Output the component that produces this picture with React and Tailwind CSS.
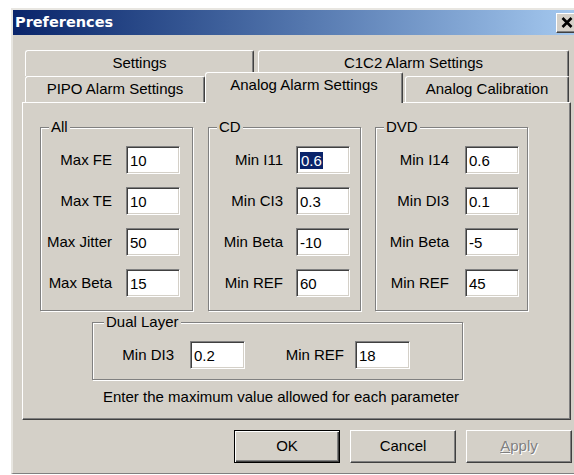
import React from "react";

const field =
  "h-[28px] bg-white border border-t-[#808080] border-l-[#808080] border-b-white border-r-white shadow-[inset_1px_1px_0_#404040,inset_-1px_-1px_0_#d4d0c8] flex items-center pl-[3px] leading-none";

const Field = ({ value, selected, width = "w-[54px]" }) => (
  <div className={`${field} ${width}`}>
    {selected ? (
      <span className="bg-[#0a246a] text-white px-[1px] py-[1px]">{value}</span>
    ) : (
      <span>{value}</span>
    )}
  </div>
);

const Group = ({ title, rows, className, rowClass }) => (
  <div
    className={`relative h-[184px] w-[153px] border border-[#808080] shadow-[inset_1px_1px_0_#fff,1px_1px_0_#fff] pt-[18px] flex flex-col gap-[13px] ${className}`}
  >
    <span className="absolute -top-[10px] left-[8px] bg-[#d4d0c8] px-[2px] leading-[18px]">
      {title}
    </span>
    {rows.map((r) => (
      <div key={r.label} className={`flex items-center justify-end ${rowClass}`}>
        <span>{r.label}</span>
        <Field value={r.value} selected={r.selected} />
      </div>
    ))}
  </div>
);

const Tab = ({ children, className }) => (
  <div
    className={`flex items-center justify-center bg-[#d4d0c8] border-l border-t border-white border-r border-r-[#404040] rounded-tl-[3px] rounded-tr-[2px] shadow-[inset_-1px_0_0_#808080] ${className}`}
  >
    {children}
  </div>
);

const Button = ({ children, isDefault, disabled }) => (
  <div
    className={`w-[106px] h-[33px] flex items-center justify-center bg-[#d4d0c8] border ${
      isDefault
        ? "border-black shadow-[inset_1px_1px_0_#fff,inset_-1px_-1px_0_#404040,inset_-2px_-2px_0_#808080]"
        : "border-t-white border-l-white border-b-[#404040] border-r-[#404040] shadow-[inset_-1px_-1px_0_#808080]"
    } ${disabled ? "text-[#808080] [text-shadow:1px_1px_0_#fff]" : ""}`}
  >
    {children}
  </div>
);

const allRows = [
  { label: "Max FE", value: "10" },
  { label: "Max TE", value: "10" },
  { label: "Max Jitter", value: "50" },
  { label: "Max Beta", value: "15" },
];

const cdRows = [
  { label: "Min I11", value: "0.6", selected: true },
  { label: "Min CI3", value: "0.3" },
  { label: "Min Beta", value: "-10" },
  { label: "Min REF", value: "60" },
];

const dvdRows = [
  { label: "Min I14", value: "0.6" },
  { label: "Min DI3", value: "0.1" },
  { label: "Min Beta", value: "-5" },
  { label: "Min REF", value: "45" },
];

export default function App() {
  return (
    <div className="w-[574px] h-[475px] overflow-hidden bg-white font-['Liberation_Sans',Arial,sans-serif] text-[15px] text-black">
      <div className="ml-[11px] mt-[8px] w-[571px] h-[466px] bg-[#d4d0c8] border-l-2 border-t-2 border-r-2 border-b border-l-[#e8e6e1] border-t-[#e8e6e1] border-r-[#404040] border-b-[#808080]">
        {/* title bar */}
        <div className="h-[25px] flex items-center justify-between bg-gradient-to-r from-[#0a246a] to-[#a6caf0]">
          <span className="pl-[2px] text-white font-bold font-['DejaVu_Sans',sans-serif] text-[14.5px]">
            Preferences
          </span>
          <div className="mr-[3px] w-[21px] h-[20px] bg-[#d4d0c8] border border-t-white border-l-white border-b-[#404040] border-r-[#404040] shadow-[inset_-1px_-1px_0_#808080] flex items-center justify-center">
            <svg width="12" height="11" viewBox="0 0 12 11">
              <path d="M1.5 1 L10.5 10 M10.5 1 L1.5 10" stroke="#000" strokeWidth="2.6" />
            </svg>
          </div>
        </div>

        <div className="pl-[9px] pt-[15px]">
          {/* tabs */}
          <div className="ml-[3px]">
            <div className="flex gap-[4px] h-[26px]">
              <Tab className="w-[229px] h-[26px]">Settings</Tab>
              <Tab className="w-[311px] h-[26px]">C1C2 Alarm Settings</Tab>
            </div>
            <div className="flex items-start h-[26px]">
              <Tab className="w-[180px] h-[26px]">PIPO Alarm Settings</Tab>
              <Tab className="relative z-10 -mt-[4px] w-[198px] h-[31px] pb-[6px]">
                Analog Alarm Settings
              </Tab>
              <Tab className="ml-[2px] w-[164px] h-[26px]">Analog Calibration</Tab>
            </div>
          </div>

          {/* page */}
          <div className="w-[549px] h-[318px] border border-t-white border-l-white border-b-[#404040] border-r-[#404040] shadow-[inset_-1px_-1px_0_#808080]">
            <div className="flex pl-[17px] pt-[24px]">
              <Group title="All" rows={allRows} rowClass="pr-[12px] gap-[14px]" />
              <Group title="CD" rows={cdRows} className="ml-[15px]" rowClass="pr-[10px] gap-[13px]" />
              <Group title="DVD" rows={dvdRows} className="ml-[14px]" rowClass="pr-[8px] gap-[16px]" />
            </div>

            <div className="relative ml-[69px] mt-[11px] w-[371px] h-[58px] border border-[#808080] shadow-[inset_1px_1px_0_#fff,1px_1px_0_#fff] pt-[18px]">
              <span className="absolute -top-[10px] left-[11px] bg-[#d4d0c8] px-[2px] leading-[18px]">
                Dual Layer
              </span>
              <div className="flex items-center">
                <span className="w-[81px] text-right">Min DI3</span>
                <div className="ml-[16px]">
                  <Field value="0.2" width="w-[55px]" />
                </div>
                <span className="w-[99px] text-right">Min REF</span>
                <div className="ml-[11px]">
                  <Field value="18" width="w-[55px]" />
                </div>
              </div>
            </div>

            <p className="ml-[80px] mt-[8px] leading-[18px]">
              Enter the maximum value allowed for each parameter
            </p>
          </div>

          {/* dialog buttons */}
          <div className="flex justify-end gap-[10px] pr-[8px] mt-[10px]">
            <Button isDefault>OK</Button>
            <Button>Cancel</Button>
            <Button disabled>
              <span>
                <span className="underline">A</span>pply
              </span>
            </Button>
          </div>
        </div>
      </div>
    </div>
  );
}
